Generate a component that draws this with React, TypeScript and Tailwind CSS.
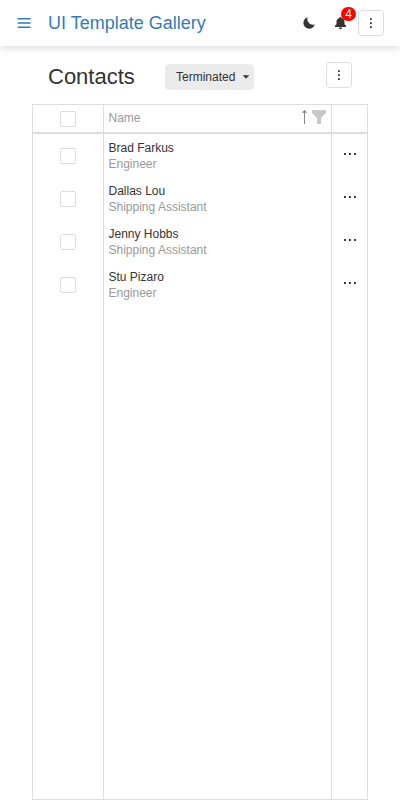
import React from "react";

const contacts = [
  { name: "Brad Farkus", title: "Engineer" },
  { name: "Dallas Lou", title: "Shipping Assistant" },
  { name: "Jenny Hobbs", title: "Shipping Assistant" },
  { name: "Stu Pizaro", title: "Engineer" },
];

function Checkbox() {
  return <span role="checkbox" aria-checked="false" className="block h-4 w-4 rounded-xs border border-[#dddddd] bg-white" />;
}

function OverflowButton() {
  return (
    <button aria-label="More" className="flex h-[26px] w-[26px] items-center justify-center rounded border border-[#dddddd] bg-white">
      <svg width="24" height="24" viewBox="0 0 24 24" fill="#333333">
        <path d="M11 7.200h1.800v1.700H11zM11 11.200h1.800v1.700H11zM11 15.200h1.800v1.700H11z" />
      </svg>
    </button>
  );
}

function Header() {
  return (
    <header className="flex h-[46px] shrink-0 items-center bg-white pr-4 pl-[17px] shadow-[0_2px_8px_rgba(0,0,0,0.15)]">
      <svg width="14" height="10" viewBox="0 0 14 10" fill="#337ab7">
        <path d="M.7 0h12.900v1.600H.7zM.7 4.200h12.900v1.600H.7zM.7 8.400h12.900V10H.7z" />
      </svg>
      <h1 className="ml-[17px] text-[18px] leading-6 text-[#337ab7]">UI Template Gallery</h1>
      <div className="ml-auto flex items-center">
        <svg width="12" height="12" viewBox="0 0 12 12" fill="#333333">
          <path d="M4.600 .3C2.200 1 .4 3.200.4 6a5.700 5.700 0 0 0 5.700 5.700c2.800 0 5-1.800 5.700-4.300C8.500 9 3 5.500 4.600.3Z" />
        </svg>
        <div className="relative mr-3 ml-5 h-3 w-[11px]">
          <svg width="11" height="13" viewBox="0 0 11 13" fill="#333333">
            <path d="M4.700 0h1.600v.9C8.300 1.200 9.500 2.600 9.500 4.400v2.800L11 8.800V10H0V8.800l1.500-1.600V4.400C1.500 2.600 2.700 1.200 4.700.9ZM3.800 10.500h3.400a1.700 1.700 0 0 1-3.400 0Z" />
          </svg>
          <span className="absolute -top-[10px] left-[6px] flex h-[14px] w-[15px] items-center justify-center rounded-full bg-[#ff0000] text-xs leading-[14px] text-white">4</span>
        </div>
        <OverflowButton />
      </div>
    </header>
  );
}

export default function App() {
  return (
    <div className="flex h-[800px] w-[400px] flex-col overflow-hidden bg-white font-['Liberation_Sans',Arial,sans-serif] text-xs text-[#333333]">
      <Header />
      <main className="flex min-h-0 flex-1 flex-col px-8 pt-4">
        <div className="flex h-[42px] shrink-0 items-start pr-4 pl-4">
          <h2 className="w-[117px] text-[22px] leading-[30px]">Contacts</h2>
          <button className="mt-[2px] flex h-[26px] w-[89px] items-center rounded bg-[#ebebeb] pl-[11px] text-xs">
            <span className="w-[66px] text-left">Terminated</span>
            <svg width="8" height="4" viewBox="0 0 8 4" fill="#333333">
              <path d="M.7 .3h6.600L4 3.700Z" />
            </svg>
          </button>
          <div className="ml-auto"><OverflowButton /></div>
        </div>
        <section className="flex min-h-0 flex-1 border border-[#dddddd]">
          <div className="w-[71px] border-r border-[#dddddd]">
            <div className="flex h-[29px] items-center justify-center border-b-2 border-[#dddddd]"><Checkbox /></div>
            {contacts.map((person) => (
              <div key={person.name} className="flex h-[43px] items-center justify-center pt-px"><Checkbox /></div>
            ))}
          </div>
          <div className="w-[228px] border-r border-[#dddddd]">
            <div className="flex h-[29px] items-start border-b-2 border-[#dddddd] pt-[5px] pr-[4px] pl-[4.5px] text-[#999999]">
              <span className="leading-4">Name</span>
              <svg className="ml-auto" width="7" height="14" viewBox="0 0 7 14" fill="#888888">
                <path d="M3 0h1v14H3zM.8 2.800L3.500 0 6.200 2.800Z" />
              </svg>
              <svg className="ml-[3px]" width="16" height="14" viewBox="0 0 16 14" fill="#c8c8c8">
                <path d="M1 0h14v3L10 8v6H6V8L1 3Z" />
              </svg>
            </div>
            {contacts.map((person) => (
              <div key={person.name} className="h-[43px] pt-[6px] pl-[4.5px] leading-4">
                <p>{person.name}</p>
                <p className="text-[#999999]">{person.title}</p>
              </div>
            ))}
          </div>
          <div className="flex-1">
            <div className="h-[29px] border-b-2 border-[#dddddd]" />
            {contacts.map((person) => (
              <div key={person.name} className="flex h-[43px] pt-[19px] pl-3">
                <svg width="12" height="2" viewBox="0 0 12 2" fill="#333333">
                  <path d="M0 .1h1.900V2H0zM5 .1h1.900V2H5zM10 .1h1.900V2H10z" />
                </svg>
              </div>
            ))}
          </div>
        </section>
      </main>
    </div>
  );
}
